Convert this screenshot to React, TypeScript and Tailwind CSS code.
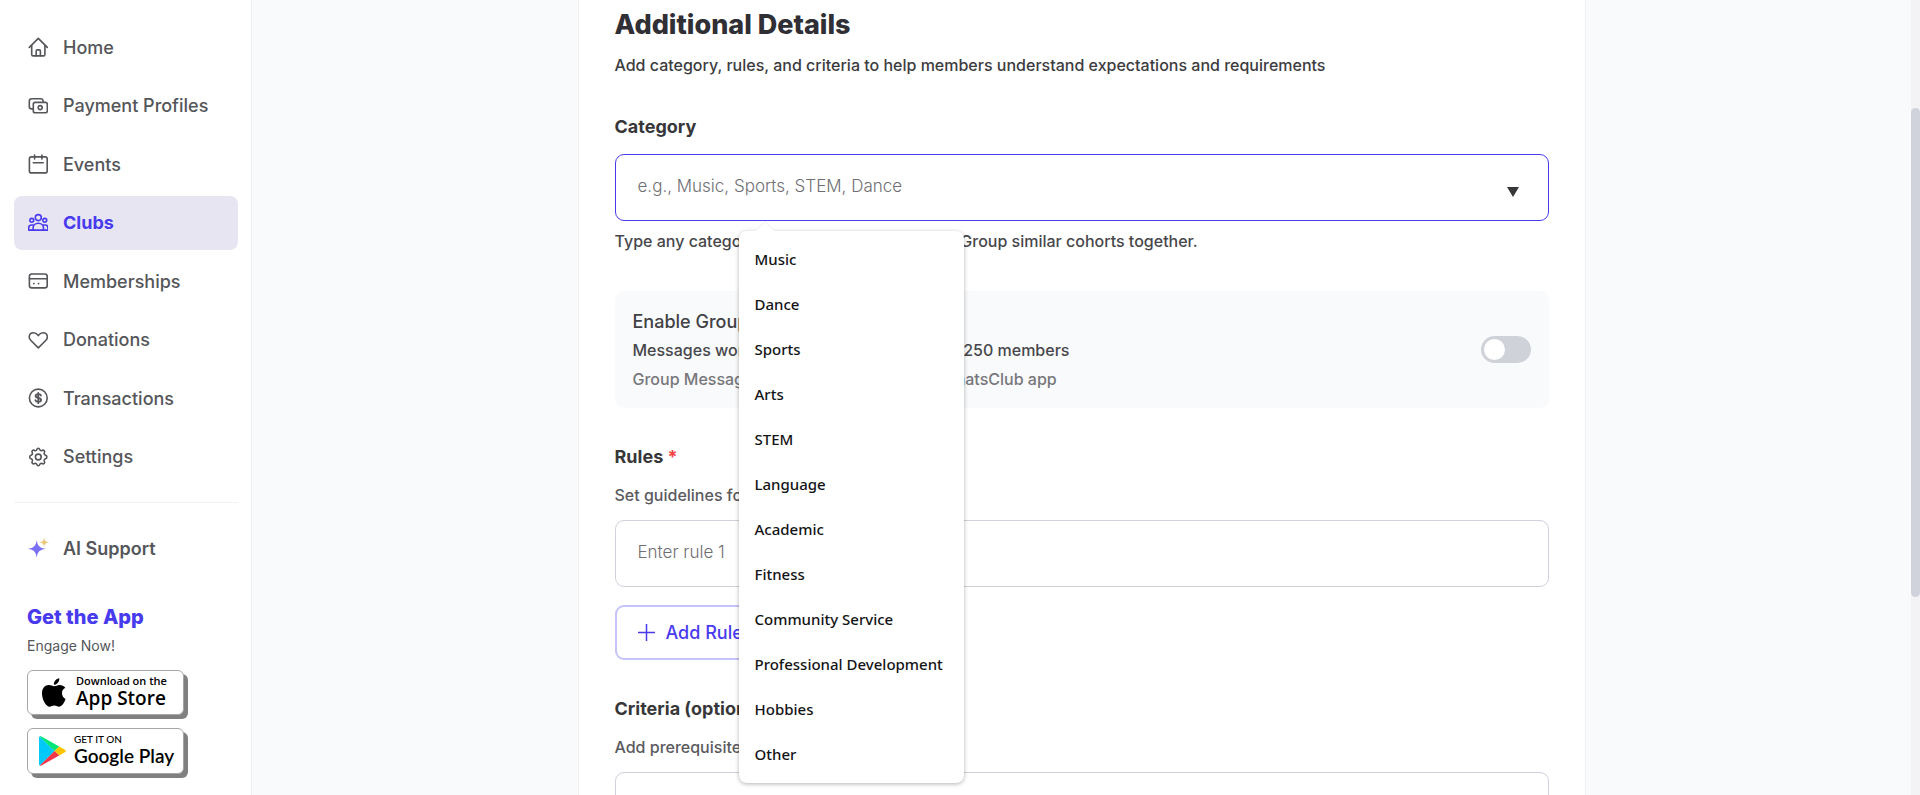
import { useState, type ReactNode } from "react";

const line = {
  fill: "none",
  stroke: "currentColor",
  strokeWidth: 1.6,
  strokeLinecap: "round" as const,
  strokeLinejoin: "round" as const,
};

function Icon({ children }: { children: ReactNode }) {
  return (
    <svg viewBox="0 0 20 20" className="size-5 shrink-0" aria-hidden="true" {...line}>
      {children}
    </svg>
  );
}

const navItems: { label: string; icon: ReactNode }[] = [
  {
    label: "Home",
    icon: (
      <>
        <path d="M1.3 10.4 10.3 1.4l9 9" />
        <path d="M3.7 8.4v9.1c0 .8.6 1.4 1.4 1.4h10.4c.8 0 1.4-.6 1.4-1.4V8.4" />
        <path d="M8.2 18.7v-4.6c0-.7.5-1.2 1.2-1.2h1.8c.7 0 1.2.5 1.2 1.2v4.6" />
      </>
    ),
  },
  {
    label: "Payment Profiles",
    icon: (
      <>
        <rect x="5.3" y="6.4" width="14" height="10.4" rx="1.8" />
        <path d="M5 12.9H3.7c-1.4 0-2.4-1-2.4-2.4V5.2c0-1.4 1-2.4 2.4-2.4h9.1c1.3 0 2.2.9 2.3 2.2v1.1" />
        <circle cx="12.2" cy="11.6" r="2" />
      </>
    ),
  },
  {
    label: "Events",
    icon: (
      <>
        <rect x="1.4" y="2.9" width="17.8" height="16" rx="2" />
        <path d="M6.6 1v4M13.9 1v4M5.3 8.8h9.9" />
      </>
    ),
  },
  {
    label: "Clubs",
    icon: (
      <>
        <circle cx="10.3" cy="4.6" r="3" />
        <circle cx="3.8" cy="7.3" r="1.9" />
        <circle cx="16.8" cy="7.3" r="1.9" />
        <path d="M5.1 17.1v-2c0-2.8 2.2-4.8 5.2-4.8s5.2 2 5.2 4.8v2" />
        <path d="M5.1 12H3.5C1.8 12 .7 13.2.7 14.8v2.3h19.2v-2.3c0-1.6-1.1-2.8-2.8-2.8h-1.6" />
      </>
    ),
  },
  {
    label: "Memberships",
    icon: (
      <>
        <rect x="1.4" y="3" width="17.8" height="13.9" rx="2.4" />
        <path d="M1.4 7.8h17.8M5.7 12.6h.3M10.4 12.6h.3" />
      </>
    ),
  },
  {
    label: "Donations",
    icon: <path d="M10.3 17.9 2.9 10.5C1.6 9.2 1 7.7 1.3 6.1 1.7 4 3.2 2.8 5.3 2.8c1.9 0 3.6 1 5 2.8 1.4-1.8 3.1-2.8 5-2.8 2.1 0 3.6 1.2 4 3.3.3 1.6-.3 3.1-1.6 4.4z" />,
  },
  {
    label: "Transactions",
    icon: (
      <>
        <circle cx="10.3" cy="10" r="8.9" />
        <path strokeWidth="1.8" d="M13 7.6c-.3-1-1.3-1.5-2.7-1.5-1.6 0-2.7.7-2.7 1.9 0 2.8 5.5 1.2 5.5 4 0 1.2-1.2 1.9-2.8 1.9-1.5 0-2.6-.6-2.9-1.7M10.3 4.8v10.4" />
      </>
    ),
  },
  {
    label: "Settings",
    icon: (
      <>
        <circle cx="10.3" cy="10" r="2.9" />
        <path d="M8.7 2.7c.3-.9.7-1.5 1.6-1.5s1.3.6 1.6 1.5c.3.9 1.2 1.2 2 .8.9-.5 1.6-.5 2.3.1.6.7.6 1.4.1 2.3-.4.8 0 1.8.9 2.1.9.3 1.7.8 1.7 2s-.8 1.7-1.7 2c-.9.3-1.3 1.3-.9 2.1.5.9.5 1.6-.1 2.3-.7.6-1.4.6-2.3.1-.8-.4-1.7-.1-2 .8-.3.9-.7 1.5-1.6 1.5s-1.3-.6-1.6-1.5c-.3-.9-1.2-1.2-2-.8-.9.5-1.6.5-2.3-.1-.6-.7-.6-1.4-.1-2.3.4-.8 0-1.800-.9-2.100-.9-.3-1.700-.8-1.700-2s.8-1.700 1.700-2c.9-.3 1.300-1.300.9-2.100-.5-.9-.5-1.600.1-2.300.7-.6 1.400-.6 2.300-.1.800.4 1.700.1 2-.8z" />
      </>
    ),
  },
];

const categories = [
  "Music",
  "Dance",
  "Sports",
  "Arts",
  "STEM",
  "Language",
  "Academic",
  "Fitness",
  "Community Service",
  "Professional Development",
  "Hobbies",
  "Other",
];

const badge =
  "flex w-[157px] items-center rounded-md border border-[#a6a6a6] bg-white text-black shadow-[4px_4px_0_#808080]";

function Sidebar() {
  return (
    <aside className="flex w-[252px] shrink-0 flex-col border-r border-[#f0f0f3] bg-white pt-5 pr-[13px] pl-[14px]">
      <nav className="flex h-[464px] shrink-0 flex-col justify-between">
        {navItems.map(({ label, icon }) => (
          <a
            key={label}
            href="#"
            className={
              label === "Clubs"
                ? "flex h-[54px] items-center gap-[15px] rounded-lg bg-[#e8e5f3] px-[14px] text-[18px] font-bold text-[#483aed]"
                : "flex h-[54px] items-center gap-[15px] rounded-lg px-[14px] text-[18px] font-medium text-[#55565a]"
            }
          >
            <Icon>{icon}</Icon>
            {label}
          </a>
        ))}
      </nav>
      <hr className="mt-[18px] border-[#f1f1f4]" />
      <a href="#" className="mt-[18px] flex h-[54px] items-center gap-[15px] px-[14px] text-[18px] font-semibold text-[#55565a]">
        <svg viewBox="0 0 20 20" className="size-5 shrink-0 overflow-visible" aria-hidden="true">
          <path fill="#7b6ff2" d="M8.7 2.2c1 5.8 2.7 7.6 9.3 8.6-6.6 1-8.3 2.8-9.3 8.9C7.7 13.6 6 11.8-.3 10.8c6.3-1 8-2.8 9-8.6z" />
          <path fill="#e9c77b" d="M16.2-.6c.5 3.2 1.5 4.3 5 4.8-3.5.5-4.5 1.6-5 4.8-.5-3.2-1.5-4.3-5-4.8 3.5-.5 4.5-1.6 5-4.8z" />
        </svg>
        AI Support
      </a>
      <div className="flex flex-col px-[13px] pt-[30px]">
        <h2 className="text-[20px] leading-6 font-extrabold text-[#483aed]">Get the App</h2>
        <p className="mt-[7px] text-[14px] leading-5 text-[#55565a]">Engage Now!</p>
        <a href="#" className={`${badge} mt-[14px] h-[45px] gap-[10px] pl-[14px]`}>
          <svg viewBox="0 0 24 29" className="h-[29px] w-6 shrink-0" aria-hidden="true">
            <path d="M20 15.2c0-2.7 1.4-4.3 3.3-5.4-1.4-2-3.5-2.8-5.7-2.8-2.3 0-3.9 1.3-5.4 1.3S8.9 7.1 6.8 7.1C3 7.2 0 10.2 0 15.4 0 21.5 4.2 28.7 7.6 28.7c1.7 0 2.6-1.2 4.7-1.2s2.9 1.2 4.7 1.2c2.7 0 5.5-4.3 6.6-7.8C21.4 20 20 17.8 20 15.2zM17.3.2c-3 .4-5.7 3.1-5.4 6.6 3.2-.1 5.7-3.2 5.4-6.6z" />
          </svg>
          <span className="flex flex-col pb-[2px] font-['Open_Sans',sans-serif]">
            <span className="text-[11px] leading-3 font-semibold">Download on the</span>
            <span className="text-[19px] leading-[22px] font-semibold">App Store</span>
          </span>
        </a>
        <a href="#" className={`${badge} mt-[13px] h-[46px] gap-[8px] pl-[11px]`}>
          <svg viewBox="0 0 27 30" className="h-[30px] w-[27px] shrink-0" aria-hidden="true">
            <path fill="#00c8f8" d="M.8.4C.3.7 0 1.2 0 2v26c0 .8.3 1.3.8 1.6L15.5 15z" />
            <path fill="#00e676" d="M.8.4C1.3.2 1.9.3 2.5.6l17.7 9.900-4.700 4.500z" />
            <path fill="#ffc400" d="m20.2 10.5 5.7 3.2c1.3.8 1.3 1.9 0 2.6l-5.7 3.2-4.7-4.5z" />
            <path fill="#f63448" d="m15.5 15 4.7 4.5L2.5 29.4c-.6.3-1.2.4-1.7.2z" />
          </svg>
          <span className="flex flex-col pb-[3px] font-['Lato',sans-serif]">
            <span className="text-[10px] leading-3 font-medium">GET IT ON</span>
            <span className="text-[19px] leading-[22px] font-semibold">Google Play</span>
          </span>
        </a>
      </div>
    </aside>
  );
}

function CategoryMenu({ onPick }: { onPick: (value: string) => void }) {
  return (
    <div className="absolute top-full left-[123px] z-10 mt-[11px] w-[225px] rounded-lg bg-white py-[6px] shadow-[0_1px_4px_rgba(0,0,0,0.3)]">
      <svg viewBox="0 0 20 11" className="absolute -top-[10px] left-4 h-[11px] w-5" aria-hidden="true">
        <path d="M0 10.5 10 .5l10 10z" fill="#fff" />
        <path d="M0 10 10 .5l10 9.5" fill="none" stroke="#ececef" />
      </svg>
      <ul role="listbox" aria-label="Category suggestions">
        {categories.map((name) => (
          <li key={name} role="option" aria-selected="false">
            <button
              type="button"
              onClick={() => onPick(name)}
              className="flex h-[45px] w-full items-center px-4 text-left font-['Noto_Sans',sans-serif] text-[15px] font-medium whitespace-nowrap text-[#141416]"
            >
              {name}
            </button>
          </li>
        ))}
      </ul>
    </div>
  );
}

const labelStyle = "block text-[18px] leading-6 font-bold text-[#37373a]";
const fieldStyle =
  "mt-[13px] block h-[67px] w-full rounded-[9px] border border-[#d0d1dc] bg-white px-[22px] pb-[3px] text-[17px] font-light text-[#333] outline-none placeholder:text-[#6f6f73]";

export default function App() {
  const [category, setCategory] = useState("");
  const [messaging, setMessaging] = useState(false);
  const [rules, setRules] = useState([""]);

  return (
    <div className="flex h-screen overflow-hidden bg-[#f9fafc] font-['Inter',sans-serif]">
      <Sidebar />
      <main className="min-w-0 flex-1 overflow-hidden">
        <form className="mx-auto max-w-[1008px] border-x border-[#f1f1f4] bg-white px-9 pt-[9px] pb-10">
          <h1 className="text-[27px] leading-8 font-extrabold text-[#2f2f35]">Additional Details</h1>
          <p className="mt-3 text-[16px] leading-6 font-medium text-[#3c3c40]">
            Add category, rules, and criteria to help members understand expectations and requirements
          </p>

          <section className="mt-[38px]">
            <label htmlFor="category" className={labelStyle}>
              Category
            </label>
            <div className="relative mt-[15px] flex h-[67px] items-center rounded-[9px] border border-[#483aed] bg-white pr-[29px] pl-[22px]">
              <input
                id="category"
                value={category}
                onChange={(e) => setCategory(e.target.value)}
                placeholder="e.g., Music, Sports, STEM, Dance"
                className="h-full min-w-0 flex-1 pb-[3px] text-[17px] font-light text-[#333] outline-none placeholder:text-[#6f6f73]"
              />
              <button type="button" aria-label="Show categories">
                <svg viewBox="0 0 12 20" className="h-5 w-3" aria-hidden="true">
                  <path d="M0 9h12l-6 10z" fill="#37373a" />
                </svg>
              </button>
              <CategoryMenu onPick={setCategory} />
            </div>
            <p className="mt-2 text-[16px] leading-6 font-medium text-[#47474b]">
              Type any category or pick from suggestions. Group similar cohorts together.
            </p>
          </section>

          <section className="mt-[38px] flex items-center justify-between rounded-[9px] bg-[#f9fafc] px-[18px] py-[17px]">
            <div>
              <label htmlFor="messaging" className="block text-[18px] leading-7 font-medium text-[#414145]">
                Enable Group Messaging
              </label>
              <p className="mt-[2px] text-[16px] leading-6 font-medium text-[#47474b]">
                Messages work best for cohorts with up to 250 members
              </p>
              <p className="mt-[5px] text-[16px] leading-6 font-medium text-[#77777b]">
                Group Messaging is available within the WhatsClub app
              </p>
            </div>
            <input
              id="messaging"
              type="checkbox"
              role="switch"
              checked={messaging}
              onChange={(e) => setMessaging(e.target.checked)}
              className="flex h-[27px] w-[50px] shrink-0 appearance-none items-center rounded-full bg-[#d0d2da] p-[3px] before:size-[21px] before:rounded-full before:bg-white before:content-[''] checked:justify-end checked:bg-[#483aed]"
            />
          </section>

          <section className="mt-[37px]">
            <label htmlFor="rule-0" className={labelStyle}>
              Rules <span className="text-[#ef4444]">*</span>
            </label>
            <p className="mt-[14px] text-[16px] leading-6 font-medium text-[#5a5a5e]">Set guidelines for club members</p>
            {rules.map((rule, i) => (
              <input
                key={i}
                id={`rule-${i}`}
                aria-label={`Rule ${i + 1}`}
                value={rule}
                onChange={(e) => setRules(rules.map((r, j) => (j === i ? e.target.value : r)))}
                placeholder={`Enter rule ${i + 1}`}
                className={fieldStyle}
              />
            ))}
            <button
              type="button"
              onClick={() => setRules([...rules, ""])}
              className="mt-[18px] flex h-[55px] items-center gap-[11px] rounded-[9px] border-2 border-[#c6c2fa] bg-white px-[21px] text-[18px] font-medium text-[#483aed]"
            >
              <svg viewBox="0 0 17 17" className="size-[17px]" aria-hidden="true">
                <path d="M8.5 0v17M0 8.5h17" stroke="currentColor" strokeWidth="1.5" />
              </svg>
              Add Rule
            </button>
          </section>

          <section className="mt-[37px]">
            <label htmlFor="criteria" className={labelStyle}>
              Criteria (optional)
            </label>
            <p className="mt-[14px] text-[16px] leading-6 font-medium text-[#5a5a5e]">Add prerequisites for joining</p>
            <input id="criteria" placeholder="Enter criteria 1" className={fieldStyle} />
          </section>
        </form>
      </main>
      <div className="w-[9px] shrink-0 bg-[#f3f3f5] pt-[108px]" aria-hidden="true">
        <div className="h-[489px] rounded-full bg-[#d0d2dc]" />
      </div>
    </div>
  );
}
